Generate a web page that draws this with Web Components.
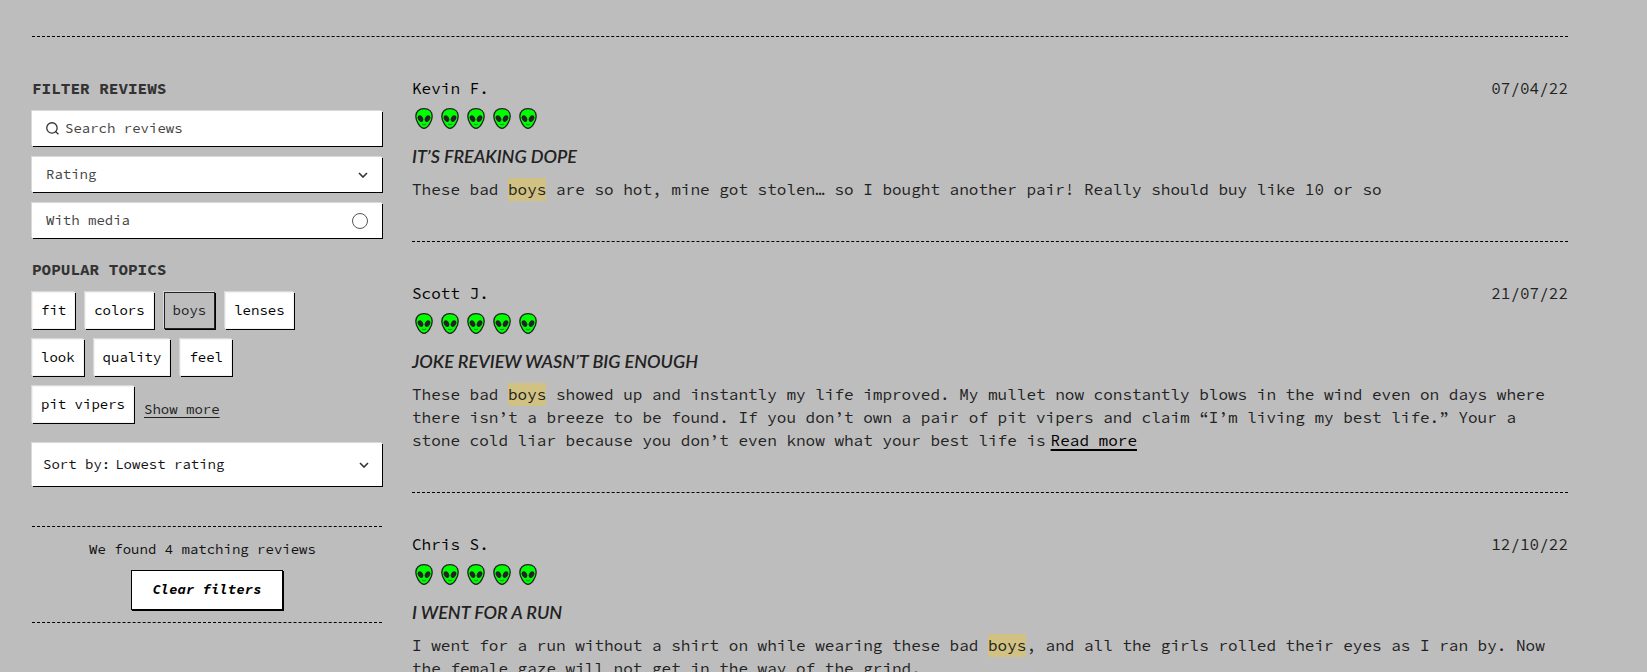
<!DOCTYPE html>
<html lang="en">
<head>
<meta charset="utf-8">
<title>Reviews</title>
<style>
  body { margin: 0; background: #bdbdbd; color: #222; font: 16px/23px "Source Code Pro", "Liberation Mono", monospace; }
</style>
</head>
<body>
<reviews-page>
  <filter-panel slot="filters"></filter-panel>
  <review-card author="Kevin F." date="07/04/22" heading="It’s freaking dope">These bad <mark>boys</mark> are so hot, mine got stolen… so I bought another pair! Really should buy like 10 or so</review-card>
  <review-card author="Scott J." date="21/07/22" heading="Joke review wasn’t big enough" more>These bad <mark>boys</mark> showed up and instantly my life improved. My mullet now constantly blows in the wind even on days where there isn’t a breeze to be found. If you don’t own a pair of pit vipers and claim “I’m living my best life.” Your a stone cold liar because you don’t even know what your best life is</review-card>
  <review-card author="Chris S." date="12/10/22" heading="I went for a run">I went for a run without a shirt on while wearing these bad <mark>boys</mark>, and all the girls rolled their eyes as I ran by. Now the female gaze will not get in the way of the grind.</review-card>
</reviews-page>

<script>
class ReviewsPage extends HTMLElement {
  constructor() {
    super();
    this.attachShadow({ mode: 'open' }).innerHTML = `
      <style>
        :host { display: block; padding: 36px 79px 0 32px; }
        .layout { display: grid; grid-template-columns: 350px minmax(0, 1fr); column-gap: 30px; border-top: 1px dashed #000; }
        aside { padding-top: 40px; }
      </style>
      <div class="layout">
        <aside><slot name="filters"></slot></aside>
        <main><slot></slot></main>
      </div>`;
  }
}

class TopicChip extends HTMLElement {
  constructor() {
    super();
    this.attachShadow({ mode: 'open' }).innerHTML = `
      <style>
        :host { display: block; }
        button { display: block; box-sizing: border-box; height: 37px; padding: 0 8px 2px; border: 1px solid #f2f2f2;
          background: #fff; color: #000; font: inherit; line-height: 20px; box-shadow: 1px 1px #000, -1px -1px #d9d9d9; cursor: pointer; }
        :host([selected]) button { background: #bdbdbd; border-color: #222; color: #222; }
      </style>
      <button type="button"><slot></slot></button>`;
    this.shadowRoot.querySelector('button').setAttribute('aria-pressed', this.hasAttribute('selected'));
  }
}

class FilterPanel extends HTMLElement {
  constructor() {
    super();
    const chevron = '<svg class="chevron" viewBox="0 0 10 6" width="10" height="6" aria-hidden="true"><path d="M1 1l4 4 4-4" fill="none" stroke="#333" stroke-width="1.6"/></svg>';
    this.attachShadow({ mode: 'open' }).innerHTML = `
      <style>
        :host { display: block; font-size: 14px; line-height: 20px; }
        h2 { margin: 0; font-size: 16px; line-height: 23px; font-weight: 700; color: #333; text-transform: uppercase; }
        .fields { display: grid; gap: 11px; margin: 11px 0 20px; }
        .field { display: flex; align-items: center; height: 35px; box-sizing: border-box; padding: 0 14px; background: #fff; color: #444;
          box-shadow: 1px 1px #000, -1px -1px #d9d9d9; }
        .search { gap: 6px; }
        input[type=search], select { flex: 1; min-width: 0; padding: 0 0 2px; margin: 0; border: 0; outline: 0; background: none; color: inherit;
          font: inherit; height: 22px; box-sizing: border-box; appearance: none; border-radius: 0; }
        input::placeholder { color: #444; opacity: 1; }
        .toggle { justify-content: space-between; }
        .toggle span, .sort label { padding-bottom: 2px; }
        input[type=checkbox] { appearance: none; width: 16px; height: 16px; margin: 0; border: 1px solid #555; border-radius: 50%; }
        input[type=checkbox]:checked { background: #222; }
        .topics { display: flex; flex-wrap: wrap; gap: 10px; margin: 11px 0 20px; max-width: 270px; }
        .topics button { padding: 0; border: 0; background: none; color: #222; font: inherit; text-decoration: underline; text-underline-offset: 3px; align-self: end; height: 24px; cursor: pointer; margin-bottom: 2px; }
        .sort { height: 43px; padding: 0 13px 0 11px; gap: 5px; color: #111; }
        .summary { display: flex; flex-direction: column; align-items: center; gap: 11px; margin-top: 40px; padding: 12px 0;
          border: dashed #000; border-width: 1px 0; color: #111; }
        .summary p { margin: 0; padding-right: 9px; }
        .clear { height: 40px; padding: 0 20px 2px; border: 1px solid #000; background: #fff; color: #000; font: italic 700 14px/20px "Source Code Pro", "Liberation Mono", monospace; box-shadow: 1px 1px #000; cursor: pointer; }
      </style>
      <h2>Filter reviews</h2>
      <div class="fields">
        <label class="field search">
          <svg viewBox="0 0 14 14" width="13" height="13" aria-hidden="true"><g fill="none" stroke="#333" stroke-width="1.4"><circle cx="6.4" cy="6.4" r="5.6"/><path d="M10.2 10.2l3.2 3"/></g></svg>
          <input type="search" placeholder="Search reviews" aria-label="Search reviews">
        </label>
        <label class="field"><select aria-label="Rating"><option>Rating</option></select>${chevron}</label>
        <label class="field toggle"><span>With media</span><input type="checkbox"></label>
      </div>
      <h2>Popular topics</h2>
      <div class="topics">
        <topic-chip>fit</topic-chip><topic-chip>colors</topic-chip><topic-chip selected>boys</topic-chip><topic-chip>lenses</topic-chip>
        <topic-chip>look</topic-chip><topic-chip>quality</topic-chip><topic-chip>feel</topic-chip>
        <topic-chip>pit vipers</topic-chip><button type="button">Show more</button>
      </div>
      <div class="field sort"><label for="sort">Sort by:</label><select id="sort"><option>Lowest rating</option></select>${chevron}</div>
      <div class="summary">
        <p>We found 4 matching reviews</p>
        <button class="clear" type="button">Clear filters</button>
      </div>`;
  }
}

class AlienRating extends HTMLElement {
  constructor() {
    super();
    const alien = `<svg viewBox="0 0 18 21" width="18" height="21" aria-hidden="true">
      <path d="M9 .7C4 .7.8 3.8.8 8.3c0 5 4.4 12 8.2 12s8.200-7 8.200-12C17.200 3.800 14 .7 9 .7z" fill="#0f0" stroke="#222" stroke-width="1.300"/>
      <ellipse cx="5.500" cy="10.600" rx="2.500" ry="3.500" transform="rotate(-30 5.500 10.600)" fill="#222"/>
      <ellipse cx="12.500" cy="10.600" rx="2.500" ry="3.500" transform="rotate(30 12.500 10.600)" fill="#222"/>
      <path d="M7 16q2 1.800 4 0" fill="none" stroke="#073" stroke-width=".9"/></svg>`;
    this.attachShadow({ mode: 'open' }).innerHTML = `
      <style>:host { display: flex; gap: 8px; padding: 0 3px; } svg { display: block; }</style>${alien.repeat(5)}`;
  }
  connectedCallback() {
    this.setAttribute('role', 'img');
    this.setAttribute('aria-label', '5 out of 5');
  }
}

class ReviewCard extends HTMLElement {
  connectedCallback() {
    if (this.shadowRoot) return;
    this.attachShadow({ mode: 'open' }).innerHTML = `
      <style>
        :host { display: block; padding: 40px 0; border-bottom: 1px dashed #000; }
        header { display: flex; justify-content: space-between; margin-bottom: 8px; }
        .author { color: #000; }
        h3 { margin: 14px 0 9px; font: italic 600 18px/26px Lato, sans-serif; color: #222; text-transform: uppercase; }
        p { margin: 0; }
        ::slotted(mark) { display: inline-block; background: #d1c283; color: inherit; }
        a { margin-left: 5px; color: #000; text-decoration: underline 2px; text-underline-offset: 3px; }
      </style>
      <header><span class="author"></span><time></time></header>
      <alien-rating></alien-rating>
      <h3></h3>
      <p><slot></slot>${this.hasAttribute('more') ? '<a href="#more">Read more</a>' : ''}</p>`;
    const $ = s => this.shadowRoot.querySelector(s);
    $('.author').textContent = this.getAttribute('author');
    $('time').textContent = this.getAttribute('date');
    $('h3').textContent = this.getAttribute('heading');
  }
}

customElements.define('topic-chip', TopicChip);
customElements.define('filter-panel', FilterPanel);
customElements.define('alien-rating', AlienRating);
customElements.define('review-card', ReviewCard);
customElements.define('reviews-page', ReviewsPage);
</script>
</body>
</html>
